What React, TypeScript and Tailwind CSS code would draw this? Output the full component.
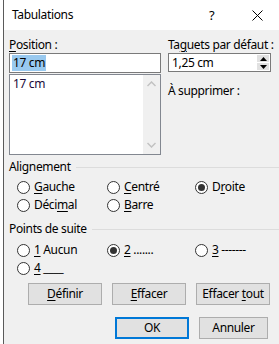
import React from "react";

const U = ({ children }: { children: React.ReactNode }) => (
  <span className="underline underline-offset-[2px] decoration-1">{children}</span>
);

const Radio = ({ checked, children, w }: { checked?: boolean; children: React.ReactNode; w: string }) => (
  <div className={`flex items-center h-[18px] ${w}`}>
    <div className="w-[13px] h-[13px] rounded-full border border-[#333333] bg-white flex items-center justify-center shrink-0">
      {checked && <div className="w-[7px] h-[7px] rounded-full bg-[#333333]" />}
    </div>
    <span className="ml-[4px] whitespace-nowrap">{children}</span>
  </div>
);

const Btn = ({ children, primary, w = "w-[74px]" }: { children: React.ReactNode; primary?: boolean; w?: string }) => (
  <div
    className={`h-[22px] ${w} flex items-center justify-center bg-[#e1e1e1] ${
      primary ? "border-2 border-[#0078d7]" : "border border-[#adadad]"
    }`}
  >
    <span className="whitespace-nowrap">{children}</span>
  </div>
);

export default function App() {
  return (
    <div
      className="w-[279px] h-[344px] flex text-[12px] leading-[16px] tracking-[-0.35px] text-black overflow-hidden"
      style={{ fontFamily: '"Noto Sans", "Open Sans", sans-serif' }}
    >
      <div className="w-[3px] bg-white shrink-0" />
      <div className="w-px bg-[#5a5a5a] shrink-0" />
      <div className="flex-1 flex flex-col">
        {/* title bar */}
        <div className="h-[30px] bg-white flex items-center pl-[8px] relative">
          <span>Tabulations</span>
          <span className="absolute left-[205px] top-[7px] text-[13px]">?</span>
          <svg className="absolute left-[248px] top-[10px]" width="11" height="11" viewBox="0 0 11 11">
            <path d="M0.5 0.5 L10.5 10.5 M10.5 0.5 L0.5 10.5" stroke="#000" strokeWidth="1" />
          </svg>
        </div>
        {/* body */}
        <div className="flex-1 bg-[#f0f0f0] flex flex-col">
          <div className="flex pl-[5px] pt-[7px]">
            {/* left column */}
            <div className="w-[152px] flex flex-col">
              <div className="h-[16px]"><U>P</U>osition :</div>
              <div className="h-[20px] border border-[#7a7a7a] bg-white flex items-center pl-[2px]">
                <span className="bg-[#99c9ef] px-[1px]">17 cm</span>
              </div>
              <div className="h-[81px] mt-[1px] border border-[#828790] bg-white flex">
                <div className="flex-1 pl-[3px] pt-[1px] text-[#1a0a3a]">17 cm</div>
                <div className="w-[17px] bg-[#f0f0f0] flex flex-col items-center justify-between py-[6px]">
                  <svg width="9" height="6" viewBox="0 0 9 6">
                    <path d="M0.5 5 L4.5 1 L8.5 5" stroke="#c2c2c2" strokeWidth="1.5" fill="none" />
                  </svg>
                  <svg width="9" height="6" viewBox="0 0 9 6">
                    <path d="M0.5 1 L4.5 5 L8.5 1" stroke="#c2c2c2" strokeWidth="1.5" fill="none" />
                  </svg>
                </div>
              </div>
            </div>
            {/* right column */}
            <div className="w-[103px] ml-[7px] flex flex-col">
              <div className="h-[16px] whitespace-nowrap">Ta<U>g</U>uets par défaut :</div>
              <div className="h-[19px] border border-[#7a7a7a] bg-white flex">
                <div className="flex-1 flex items-center pl-[3px]">1,25 cm</div>
                <div className="w-[14px] flex flex-col p-[1px] gap-[1px]">
                  <div className="flex-1 bg-[#e1e1e1] flex items-center justify-center">
                    <svg width="7" height="4" viewBox="0 0 7 4"><path d="M0 4 L3.5 0 L7 4 Z" fill="#000" /></svg>
                  </div>
                  <div className="flex-1 bg-[#e1e1e1] flex items-center justify-center">
                    <svg width="7" height="4" viewBox="0 0 7 4"><path d="M0 0 L3.5 4 L7 0 Z" fill="#000" /></svg>
                  </div>
                </div>
              </div>
              <div className="mt-[11px]">À supprimer :</div>
            </div>
          </div>

          {/* Alignement */}
          <div className="flex items-center mt-[4px] pl-[5px] h-[16px]">
            <span>Alignement</span>
            <div className="flex-1 h-px bg-[#dcdcdc] ml-[5px]" />
          </div>
          <div className="flex flex-col pl-[13px] mt-[3px]">
            <div className="flex">
              <Radio w="w-[90px]"><U>G</U>auche</Radio>
              <Radio w="w-[88px]"><U>C</U>entré</Radio>
              <Radio w="w-[70px]" checked>D<U>r</U>oite</Radio>
            </div>
            <div className="flex">
              <Radio w="w-[90px]">Déci<U>m</U>al</Radio>
              <Radio w="w-[88px]"><U>B</U>arre</Radio>
            </div>
          </div>

          {/* Points de suite */}
          <div className="flex items-center mt-[7px] pl-[5px] h-[16px]">
            <span>Points de suite</span>
            <div className="flex-1 h-px bg-[#dcdcdc] ml-[5px]" />
          </div>
          <div className="flex flex-col pl-[13px] mt-[4px]">
            <div className="flex">
              <Radio w="w-[90px]"><U>1</U> Aucun</Radio>
              <Radio w="w-[88px]" checked><U>2</U> .......</Radio>
              <Radio w="w-[70px]"><U>3</U> -------</Radio>
            </div>
            <div className="flex">
              <Radio w="w-[90px]"><U>4</U> ____</Radio>
            </div>
          </div>

          {/* buttons */}
          <div className="flex pl-[24px] gap-[10px] mt-[6px]">
            <Btn><U>D</U>éfinir</Btn>
            <Btn><U>E</U>ffacer</Btn>
            <Btn>Effacer <U>t</U>out</Btn>
          </div>
          <div className="flex pl-[111px] gap-[10px] mt-[12px]">
            <Btn primary>OK</Btn>
            <Btn w="w-[69px]">Annuler</Btn>
          </div>
        </div>
      </div>
    </div>
  );
}
